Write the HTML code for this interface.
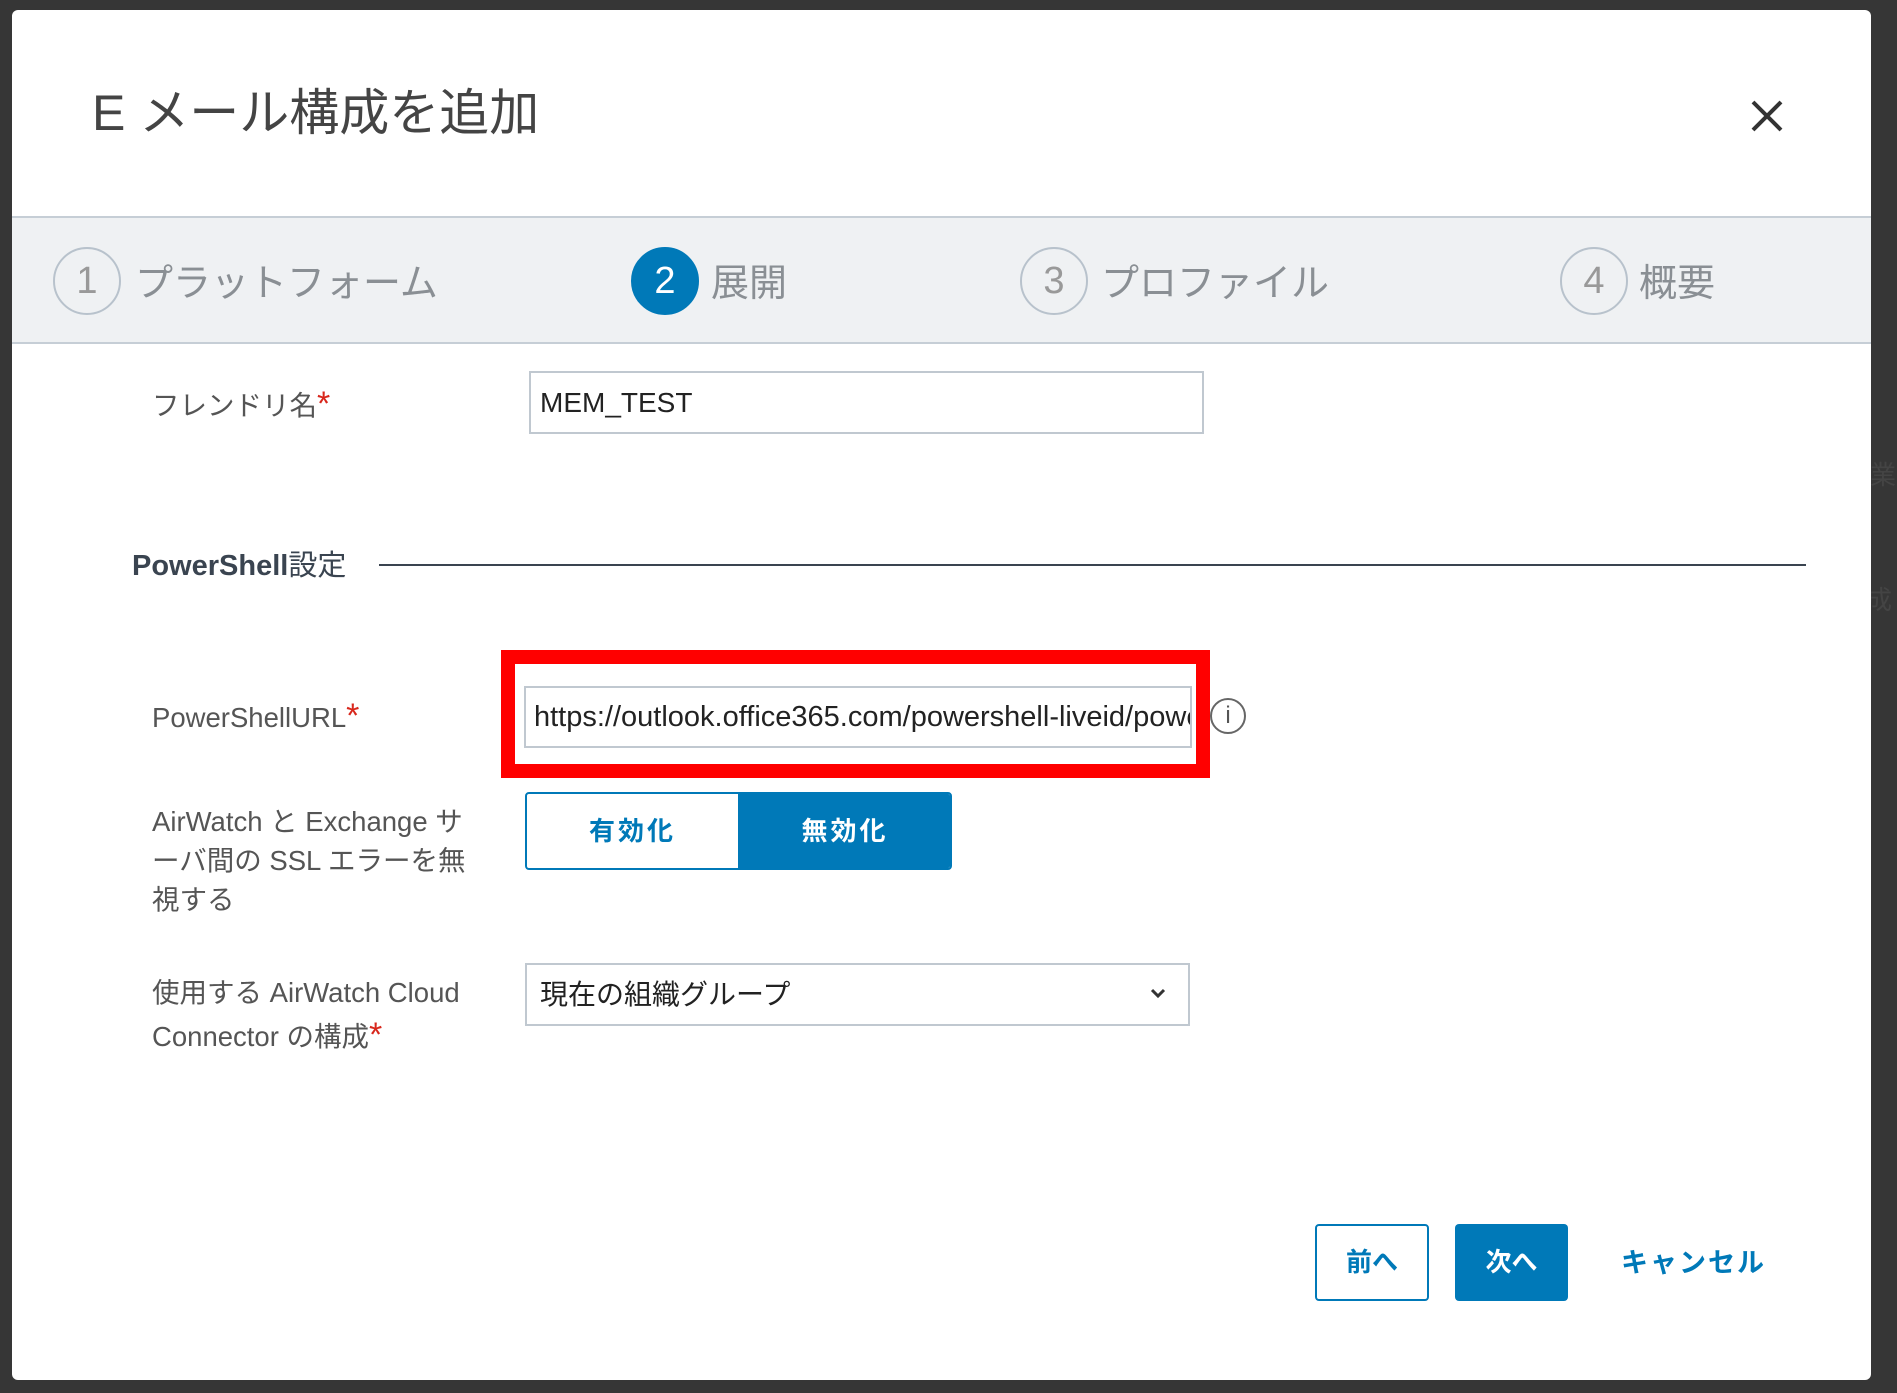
<!DOCTYPE html>
<html><head><meta charset="utf-8"><style>
*{box-sizing:border-box;margin:0;padding:0}
body{width:1897px;height:1393px;background:#363636;position:relative;overflow:hidden;font-family:"Liberation Sans","Noto Sans CJK JP",sans-serif;}
.m{position:absolute;left:12px;top:10px;width:1859px;height:1370px;background:#fff;border-radius:6px}
.a{position:absolute;white-space:nowrap}
.lbl{color:#555;font-size:27.5px}
.circ{position:absolute;width:68px;height:68px;border-radius:50%;border:2px solid #b8c2cc;color:#999;font-size:38px;text-align:center;line-height:64px}
.st{position:absolute;font-size:38px;color:#8a8f94;top:252px}
.req{color:#d8271c;font-size:34px}
.inp{position:absolute;border:2px solid #c0c8d0;background:#fff;font-size:28px;color:#222;padding-left:9px;overflow:hidden;white-space:nowrap}
</style></head><body>
<div class="a" style="left:1870px;top:455px;color:#444;font-size:26px">業</div>
<div class="a" style="left:1866px;top:580px;color:#444;font-size:26px">成</div>
<div class="m"></div>
<div class="a" style="left:92px;top:73px;font-size:50px;color:#444">E メール構成を追加</div>
<svg class="a" style="left:1750px;top:99px" width="34" height="34"><path d="M3 3L31 31M31 3L3 31" stroke="#333" stroke-width="4"/></svg>
<div class="a" style="left:12px;top:216px;width:1859px;height:128px;background:#eff1f3;border-top:2px solid #c6ced6;border-bottom:2px solid #c6ced6"></div>
<div class="circ" style="left:53px;top:247px">1</div><div class="st" style="left:135px">プラットフォーム</div>
<div class="circ" style="left:631px;top:247px;background:#0079b8;border-color:#0079b8;color:#fff">2</div><div class="st" style="left:711px">展開</div>
<div class="circ" style="left:1020px;top:247px">3</div><div class="st" style="left:1101px">プロファイル</div>
<div class="circ" style="left:1560px;top:247px">4</div><div class="st" style="left:1639px">概要</div>
<div class="a lbl" style="left:152px;top:383px">フレンドリ名<span class="req">*</span></div>
<div class="inp" style="left:529px;top:371px;width:675px;height:63px;line-height:59px">MEM_TEST</div>
<div class="a" style="left:132px;top:542px;font-size:29px;font-weight:bold;color:#3a4450">PowerShell<span style="font-weight:normal">設定</span></div>
<div class="a" style="left:379px;top:564px;width:1427px;height:2px;background:#3a4450"></div>
<div class="a" style="left:501px;top:650px;width:709px;height:128px;border:14px solid #f00"></div>
<div class="inp" style="left:524px;top:686px;width:668px;height:62px;line-height:58px;padding-left:8px;font-size:29px">https://outlook.office365.com/powershell-liveid/powershell</div>
<div class="a" style="left:1210px;top:698px;width:36px;height:36px;border:2px solid #666;border-radius:50%;text-align:center;line-height:32px;font-size:24px;color:#555">i</div>
<div class="a lbl" style="left:152px;top:697px">PowerShellURL<span class="req">*</span></div>
<div class="a" style="left:525px;top:792px;width:427px;height:78px;border:2px solid #0079b8;border-radius:4px;overflow:hidden;font-size:26px;font-weight:bold;letter-spacing:3px">
<div class="a" style="left:0;top:0;width:211px;height:74px;line-height:74px;text-align:center;color:#0079b8">有効化</div>
<div class="a" style="left:211px;top:0;width:214px;height:74px;line-height:74px;text-align:center;color:#fff;background:#0079b8">無効化</div></div>
<div class="a lbl" style="left:152px;top:802px;line-height:39px">AirWatch と Exchange サ<br>ーバ間の SSL エラーを無<br>視する</div>
<div class="inp" style="left:525px;top:963px;width:665px;height:63px;line-height:59px;padding-left:13px">現在の組織グループ</div>
<svg class="a" style="left:1150px;top:988px" width="16" height="12"><path d="M2 2L8 8L14 2" stroke="#333" stroke-width="3" fill="none"/></svg>
<div class="a lbl" style="left:152px;top:972px;line-height:42px">使用する AirWatch Cloud<br>Connector の構成<span class="req">*</span></div>
<div class="a" style="left:1315px;top:1224px;width:114px;height:77px;border:2px solid #0079b8;border-radius:4px;color:#0079b8;font-size:26px;font-weight:bold;text-align:center;line-height:73px">前へ</div>
<div class="a" style="left:1455px;top:1224px;width:113px;height:77px;background:#0079b8;border-radius:4px;color:#fff;font-size:26px;font-weight:bold;text-align:center;line-height:77px">次へ</div>
<div class="a" style="left:1621px;top:1241px;color:#0079b8;font-size:27px;font-weight:bold;letter-spacing:2px">キャンセル</div>
</body></html>
